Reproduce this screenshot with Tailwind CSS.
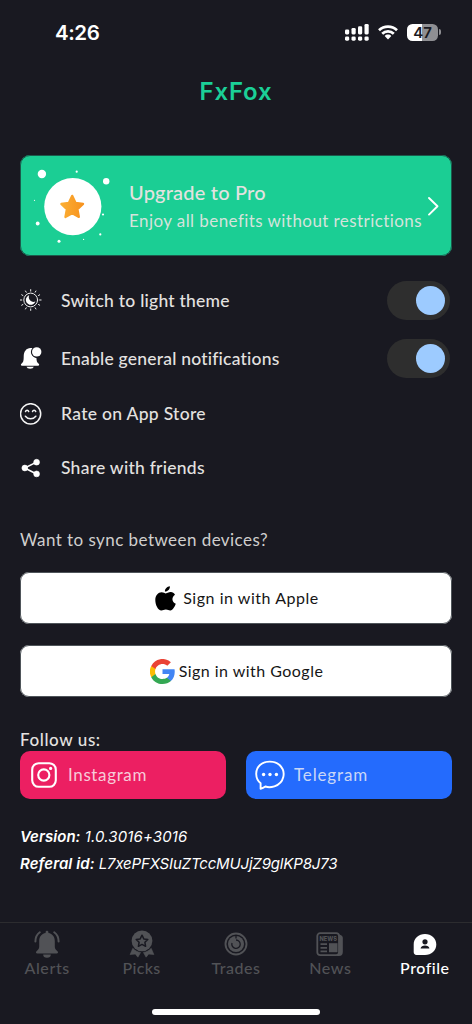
<!DOCTYPE html>
<html lang="en">
<head>
<meta charset="utf-8">
<meta name="viewport" content="width=device-width, initial-scale=1">
<title>FxFox</title>
<script src="https://cdn.jsdelivr.net/npm/@tailwindcss/browser@4"></script>
</head>
<body class="bg-[#191921]">
<div class="w-[472px] h-[1024px] flex flex-col overflow-hidden bg-[#191921] text-[#e4e2e0] font-['Lato','Noto_Sans',sans-serif] whitespace-nowrap">

  <!-- Status bar -->
  <header class="h-16 flex items-center justify-between pl-[55px] pr-[31px] text-white shrink-0">
    <span class="font-['Inter',sans-serif] font-semibold text-[20.5px] leading-6 tracking-[-0.42px] pt-px">4:26</span>
    <div class="flex items-center gap-[9px]">
      <svg class="w-6 h-[17px]" viewBox="0 0 24 17" fill="currentColor">
        <rect x="0" y="5.4" width="4.2" height="5" rx="1.3"/><rect x="6.5" y="4" width="4.2" height="6.4" rx="1.3"/><rect x="13" y="2.2" width="4.2" height="8.2" rx="1.3"/><rect x="19.5" y="0" width="4.2" height="10.4" rx="1.3"/>
        <rect x="0" y="12.4" width="4.2" height="4.3" rx="1.4"/><rect x="6.5" y="12.4" width="4.2" height="4.3" rx="1.4"/><rect x="13" y="12.4" width="4.2" height="4.3" rx="1.4"/><rect x="19.5" y="12.4" width="4.2" height="4.3" rx="1.4"/>
      </svg>
      <svg class="w-5 h-[15px]" viewBox="0 0 20 15" fill="none" stroke="currentColor" stroke-width="2.7">
        <path d="M1 5.2a13 13 0 0 1 18 0"/><path d="M4.2 8.8a8.3 8.3 0 0 1 11.6 0"/>
        <path d="M10 9.6c1.3 0 2.4.5 3.3 1.3L10 14.6l-3.3-3.7c.9-.8 2-1.3 3.3-1.3Z" fill="currentColor" stroke="none"/>
      </svg>
      <div class="flex items-center gap-px">
        <div class="w-[31px] h-[17px] rounded-[5.5px] bg-linear-to-r from-white from-48% to-[#8f8f93] to-48% flex items-center justify-center text-[#191921] font-['Inter',sans-serif] font-semibold text-[15px] leading-none">47</div>
        <div class="w-[2px] h-[6px] rounded-r-full bg-[#8f8f93]"></div>
      </div>
    </div>
  </header>

  <h1 class="h-[54px] pt-px flex items-center justify-center text-[#1bd097] font-['Inter',sans-serif] font-semibold text-[24px] leading-none tracking-[0.8px] shrink-0">FxFox</h1>

  <main class="flex-1 flex flex-col px-5 pt-[37px]">
    <!-- Upgrade card -->
    <section class="h-[101px] w-[432px] rounded-[10px] bg-[#1bce94] outline-1 outline-[#1c5a4c] -outline-offset-1 flex items-center shrink-0">
      <svg class="w-[100px] h-[100px] shrink-0" viewBox="20 155 100 100" fill="#fff">
        <defs><linearGradient id="star" x1="0" y1="0" x2="1" y2="0"><stop offset="0" stop-color="#fbae33"/><stop offset="1" stop-color="#f7931e"/></linearGradient></defs>
        <circle cx="72.8" cy="205.6" r="28.6"/>
        <circle cx="41.9" cy="173" r="4.2"/><circle cx="106.2" cy="180.2" r="3.2"/><circle cx="76.7" cy="170.7" r="1.1"/>
        <circle cx="34.5" cy="199.3" r=".6"/><circle cx="37.7" cy="222.5" r="1.9"/><circle cx="59" cy="240.3" r="1.5"/>
        <circle cx="83.6" cy="238.4" r=".6"/><circle cx="100.3" cy="233.4" r="1.1"/><circle cx="103" cy="213.5" r="1.1"/>
        <path d="M72.2 194.8l3.3 7 7.600 1.100-5.600 5.400 1.400 7.700-6.700-3.700-6.800 3.700 1.400-7.700-5.500-5.400 7.600-1.100z" fill="url(#star)" stroke="url(#star)" stroke-width="2.200" stroke-linejoin="round"/>
      </svg>
      <div class="flex-1 flex flex-col gap-[3px] pl-[9px] pt-[2px]">
        <span class="text-[20px] leading-[26px] font-medium tracking-[0.2px]">Upgrade to Pro</span>
        <span class="text-[17px] leading-[26px] tracking-[0.43px] text-[#d5e3dc]">Enjoy all benefits without restrictions</span>
      </div>
      <svg class="w-3 h-5 mr-[13px] shrink-0" viewBox="0 0 12 20" fill="none" stroke="#fff" stroke-width="1.900" stroke-linecap="round" stroke-linejoin="round"><path d="M2 2l8.500 8.300L2 18.600"/></svg>
    </section>

    <!-- Settings -->
    <section class="mt-[15px] flex flex-col text-[17.5px] font-medium">
      <div class="h-[58px] flex items-center">
        <svg class="w-[22px] h-[22px] mr-[19px]" viewBox="0 0 22 22" fill="none" stroke="#f0f0f0" stroke-width="1" stroke-linecap="round">
          <circle cx="10.7" cy="11" r="6.9"/>
          <path d="M10.7.6v1.500M10.7 19.900v1.500M.3 11h1.500M19.600 11h1.500M5.500 2l.7 1.200M15.200 18.800l.7 1.200M1.700 5.800l1.200.7M18.500 15.500l1.200.7M1.700 16.200l1.200-.7M18.500 6.500l1.200-.7M5.500 20l.7-1.200M15.200 3.200l.7-1.200"/>
          <path d="M9.200 6.300a4.900 4.900 0 1 0 6.200 6.300 4.800 4.800 0 0 1-6.200-6.300Z" fill="#fff" stroke="none"/>
        </svg>
        <span class="flex-1 tracking-[0.23px] pt-[2px]">Switch to light theme</span>
        <div class="w-[63px] h-[39px] mr-[2px] rounded-full bg-[#2e2e2e] flex items-center justify-end pr-[5px]"><div class="w-[29px] h-[29px] rounded-full bg-[#9dcbff]"></div></div>
      </div>
      <div class="h-[58px] flex items-center">
        <svg class="w-[22px] h-[22px] mr-[19px]" viewBox="0 0 22 22" fill="#fff">
          <path d="M10.4 1c1 0 1.800.1 2.500.4A6 6 0 0 0 16.400 11c.2 3.200.7 4.600 2.300 5.700.9.7.4 2-.6 2H2c-1.100 0-1.500-1.300-.6-2 1.900-1.300 2.300-3 2.300-7.200C3.700 4.500 6.500 1 10.400 1Z"/>
          <circle cx="16.600" cy="5" r="5.700" fill="#191921"/><circle cx="16.700" cy="4.900" r="4.700"/><path d="M6.500 19.700h7.300a3.700 2.500 0 0 1-7.300 0Z"/>
        </svg>
        <span class="flex-1 tracking-[0.21px] pt-[2px]">Enable general notifications</span>
        <div class="w-[63px] h-[39px] mr-[2px] rounded-full bg-[#2e2e2e] flex items-center justify-end pr-[5px]"><div class="w-[29px] h-[29px] rounded-full bg-[#9dcbff]"></div></div>
      </div>
      <div class="h-[54px] flex items-center">
        <svg class="w-[22px] h-[22px] mr-[19px]" viewBox="0 0 22 22" fill="none" stroke="#f4f4f4" stroke-width="1.500" stroke-linecap="round">
          <circle cx="10.600" cy="10.800" r="10.100"/><path d="M5.400 13.200c2.600 3.400 7.800 3.400 10.400 0M5.500 8.600c.6-1.800 2.600-1.800 3.200 0M12.500 8.600c.6-1.800 2.600-1.800 3.200 0"/>
        </svg>
        <span class="tracking-[0.3px] pt-px">Rate on App Store</span>
      </div>
      <div class="h-[53px] flex items-center">
        <svg class="w-[22px] h-[22px] mr-[19px]" viewBox="0 0 22 22" fill="#fff" stroke="#fff">
          <path d="M16.500 5.100L4.700 11l11.800 6" fill="none" stroke-width="1.600"/><circle cx="16.600" cy="5.200" r="2.900" stroke-width=".6"/><circle cx="4.800" cy="11" r="2.900" stroke-width=".6"/><circle cx="16.600" cy="16.900" r="2.900" stroke-width=".6"/>
        </svg>
        <span class="tracking-[0.25px] pt-px">Share with friends</span>
      </div>
    </section>

    <!-- Account sync -->
    <p class="mt-[33px] text-[17px] leading-[26px] tracking-[0.44px] text-[#d0cfce]">Want to sync between devices?</p>
    <div class="mt-[19px] w-[432px] flex flex-col gap-[21px] text-[16px] text-[#161616]">
      <div class="h-[52px] rounded-[9px] bg-white outline-1 outline-[#4f555a] -outline-offset-1 flex items-center justify-center gap-[7px] pl-[2px]">
        <svg class="w-[21px] h-[25px]" viewBox="0 0 21 25" fill="#000">
          <path d="M14.900.2c.2 2.900-2.300 5.500-5 5.300C9.700 2.800 12.200.3 14.900.2Z"/>
          <path d="M20 8.800c-3.700 2.300-3.300 7.300.8 9-1 2.800-3 6.400-5.400 6.700-1.800.1-2.300-1-4.500-1-2.200 0-2.800 1-4.500 1C3 24.400.3 18.700.3 13.900c0-4.600 2.900-7.600 6.300-7.700 1.900 0 3.300 1.200 4.300 1.200s2.700-1.400 5-1.300c1.600.1 3.100.9 4.100 2.700Z"/>
        </svg>
        <span class="tracking-[0.54px]">Sign in with Apple</span>
      </div>
      <div class="h-[52px] rounded-[9px] bg-white outline-1 outline-[#4f555a] -outline-offset-1 flex items-center justify-center gap-[4px] pl-px">
        <svg class="w-[25px] h-[25px]" viewBox="0 0 48 48">
          <path fill="#4285f4" d="M47.500 24.500c0-1.600-.2-3.200-.4-4.700H24v9.100h13.200a11.500 11.500 0 0 1-4.900 7.400v6.100h7.900c4.600-4.300 7.300-10.500 7.300-17.900z"/>
          <path fill="#34a853" d="M24 48c6.500 0 12-2.100 16.200-5.800l-7.900-6c-2.200 1.500-5 2.300-8.300 2.300-6.300 0-11.600-4.200-13.500-9.900H2.400v6.200C6.500 43 14.600 48 24 48z"/>
          <path fill="#fbbc04" d="M10.500 28.600a14 14 0 0 1 0-9.200v-6.200H2.400a24 24 0 0 0 0 21.600z"/>
          <path fill="#ea4335" d="M24 9.500c3.500 0 6.700 1.200 9.200 3.600l6.900-6.900A24 24 0 0 0 2.400 13.200l8.100 6.200C12.400 13.700 17.700 9.500 24 9.500z"/>
        </svg>
        <span class="tracking-[0.47px]">Sign in with Google</span>
      </div>
    </div>

    <!-- Social links -->
    <p class="mt-[30px] h-[24px] text-[17px] leading-[26px] font-medium tracking-[0.6px]">Follow us:</p>
    <div class="grid grid-cols-2 gap-5 text-[17px]">
      <div class="h-12 rounded-[10px] bg-[#ec1f62] flex items-center pl-[11px] gap-[11px] text-[#f7cbd8]">
        <svg class="w-[26px] h-[26px]" viewBox="0 0 26 26" fill="none" stroke="#fff" stroke-width="2.100"><rect x="1.200" y="1.200" width="23.600" height="23.600" rx="6.500"/><circle cx="12.800" cy="13" r="5.600"/><circle cx="19.600" cy="6.400" r="1.600" fill="#fff" stroke="none"/></svg>
        <span class="tracking-[0.63px]">Instagram</span>
      </div>
      <div class="h-12 rounded-[10px] bg-[#246bfd] flex items-center pl-[9px] gap-[9px] text-[#c9d7f7]">
        <svg class="w-[30px] h-[30px]" viewBox="0 0 30 30" fill="none" stroke="#fff" stroke-width="1.900" stroke-linejoin="round"><path d="M5.600 28.800V23.300C-.2 18.500-.1 9.500 5 5a15 13.800 0 0 1 19.600 0c7 6.800 4.600 18-5.200 21.300-3 1-6.800 1-9 .200-1.500 1.100-3 1.900-4.800 2.300Z"/><g fill="#fff" stroke="none"><circle cx="8.600" cy="14.500" r="1.700"/><circle cx="15" cy="14.500" r="1.700"/><circle cx="21.400" cy="14.500" r="1.700"/></g></svg>
        <span class="tracking-[0.85px]">Telegram</span>
      </div>
    </div>

    <!-- Build details -->
    <div class="mt-[25px] flex flex-col gap-px text-[15px] leading-[26px] italic text-white font-['Inter',sans-serif]">
      <p class="tracking-[0.13px]"><b class="font-semibold tracking-[0.05px]">Version:</b> 1.0.3016+3016</p>
      <p class="tracking-[-0.16px]"><b class="font-semibold tracking-[0.1px]">Referal id:</b> L7xePFXSIuZTccMUJjZ9glKP8J73</p>
    </div>
  </main>

  <!-- Tab bar -->
  <nav class="h-[102px] border-t-[1.5px] border-[#2c2c2f] flex flex-col items-center shrink-0">
    <div class="w-full h-[86px] grid grid-cols-5 text-[16px] font-medium text-[#515256] pt-[7px]">
      <div class="flex flex-col items-center">
        <svg class="w-7 h-7" viewBox="0 0 28 28" fill="currentColor"><path d="M14 .8c.8 0 1.400.6 1.400 1.400v.7c4 .7 6.400 3.700 6.400 8v5.500c0 2 .6 2.900 2.700 4.800 1 1 .5 2.300-.8 2.300H4.300c-1.300 0-1.800-1.400-.8-2.300 2-1.900 2.700-2.800 2.700-4.800v-5.500c0-4.300 2.400-7.300 6.400-8v-.7c0-.8.6-1.400 1.400-1.400ZM10.200 24.500h7.600a3.800 3.200 0 0 1-7.600 0Z"/><path d="M6.800 2.200C3.800 4.300 2.400 7.500 2.400 11.500M21.200 2.200c3 2.100 4.400 5.300 4.400 9.300" fill="none" stroke="currentColor" stroke-width="2" stroke-linecap="round"/></svg>
        <span class="leading-5 tracking-[0.62px]">Alerts</span>
      </div>
      <div class="flex flex-col items-center">
        <svg class="w-7 h-7" viewBox="0 0 28 28" fill="currentColor"><circle cx="14" cy="10.800" r="10.400"/><path d="M14 5.200l1.800 3.700 4 .6-2.900 2.800.7 4-3.600-1.900-3.600 1.900.7-4-2.900-2.800 4-.6z" fill="none" stroke="#191921" stroke-width="1.500" stroke-linejoin="round"/><path d="M4.800 18.300c2 2.300 4.600 3.700 7.800 4.200l-2.700 4.700-2.600-3.100-5.200.5zM23.200 18.300c-2 2.300-4.600 3.700-7.800 4.200l2.700 4.700 2.600-3.100 5.200.5z" stroke="currentColor" stroke-width=".6" stroke-linejoin="round"/></svg>
        <span class="leading-5 tracking-[0.32px]">Picks</span>
      </div>
      <div class="flex flex-col items-center">
        <svg class="w-7 h-7" viewBox="0 0 28 28" fill="none" stroke="currentColor"><circle cx="14" cy="14" r="10.500" stroke-width="1.900"/><circle cx="14" cy="14" r="8" fill="currentColor" stroke="none"/><path d="M14 5.500v3M14 10a4.200 4.200 0 1 1-4 3" stroke="#191921" stroke-width="1.300"/></svg>
        <span class="leading-5 tracking-[0.5px]">Trades</span>
      </div>
      <div class="flex flex-col items-center">
        <svg class="w-7 h-7" viewBox="0 0 28 28" fill="none" stroke="currentColor" stroke-width="1.800"><path d="M23 4.500q3.800.5 3.800 3.500v14q0 3.900-3.800 3.900h-2z" fill="currentColor" stroke="none"/><rect x="1.300" y="3.200" width="21.700" height="21.900" rx="2.800" fill="#191921"/><path d="M4.500 14.200H11M4.500 17.800H11M4.500 21.400H11" stroke-width="1.700"/><rect x="13" y="13.200" width="8.500" height="9" fill="currentColor" stroke="none"/><text x="12.200" y="10.700" text-anchor="middle" textLength="17.500" lengthAdjust="spacingAndGlyphs" font-family="Inter" font-weight="800" font-size="6.300" fill="currentColor" stroke="none">NEWS</text></svg>
        <span class="leading-5 tracking-[0.6px]">News</span>
      </div>
      <div class="flex flex-col items-center text-white">
        <svg class="w-7 h-7" viewBox="0 0 28 28" fill="currentColor"><path d="M14 4c6.400 0 11.300 4.300 11.300 10.400S20.400 24.900 14 24.900H5.500a2.800 2.800 0 0 1-2.800-2.800v-7.700C2.700 8.300 7.600 4 14 4Z"/><g fill="#191921"><circle cx="14" cy="11.800" r="2.600"/><path d="M9.600 18.600c0-4.100 8.800-4.100 8.800 0z"/></g></svg>
        <span class="leading-5 tracking-[0.5px]">Profile</span>
      </div>
    </div>
    <div class="w-[168px] h-[6px] rounded-full bg-white shrink-0"></div>
  </nav>
</div>
</body>
</html>
